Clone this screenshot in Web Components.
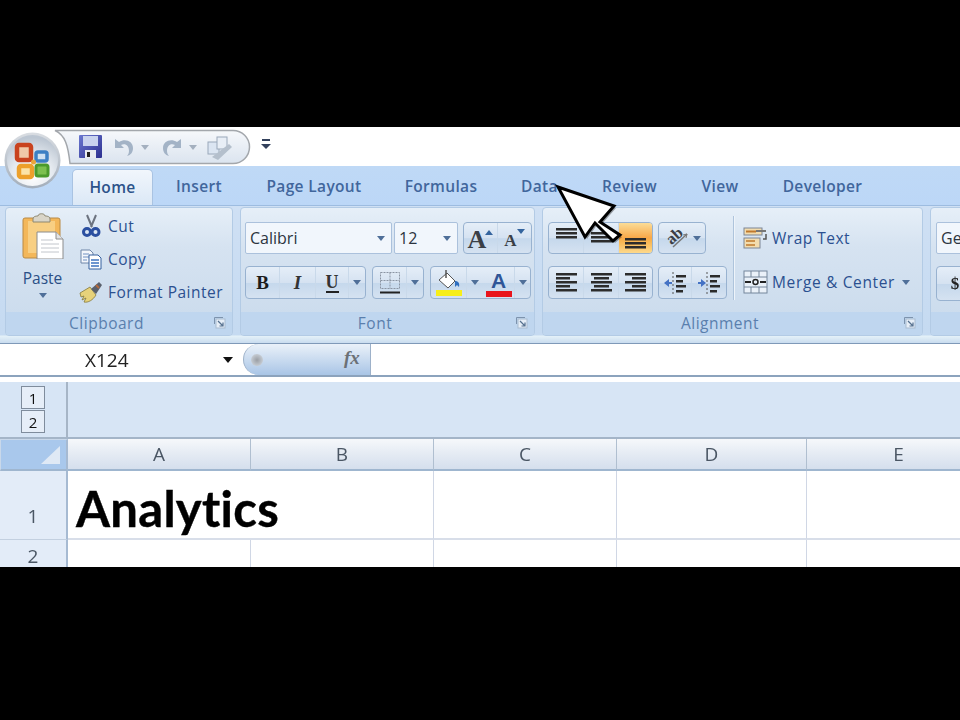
<!DOCTYPE html>
<html>
<head>
<meta charset="utf-8">
<title>Analytics</title>
<style>
  html, body { margin: 0; background: #000; }
  body { padding-top: 127px; height: 593px; overflow: hidden; font-family: "Open Sans", sans-serif; }
</style>
</head>
<body>
<xl-window>
  <xl-title-bar></xl-title-bar>
  <xl-tabs>
    <xl-tab w="81" active>Home</xl-tab>
    <xl-tab w="92">Insert</xl-tab>
    <xl-tab w="138">Page Layout</xl-tab>
    <xl-tab w="116">Formulas</xl-tab>
    <xl-tab w="81">Data</xl-tab>
    <xl-tab w="99">Review</xl-tab>
    <xl-tab w="82">View</xl-tab>
    <xl-tab w="123">Developer</xl-tab>
  </xl-tabs>
  <xl-ribbon>
    <xl-group label="Clipboard" w="228" launcher>
      <xl-paste></xl-paste>
      <div style="display:flex;flex-direction:column;padding-top:1px">
        <xl-row-button>
          <svg slot="icon" width="24" height="24" viewBox="0 0 24 24"><path d="M8 1l5 12M17 1l-5 12" stroke="#6d7480" stroke-width="2" fill="none"/><circle cx="8" cy="18" r="3.500" fill="none" stroke="#2b4fa0" stroke-width="3"/><circle cx="16.500" cy="18" r="3.500" fill="none" stroke="#2b4fa0" stroke-width="3"/></svg>
          Cut
        </xl-row-button>
        <xl-row-button>
          <svg slot="icon" width="24" height="24" viewBox="0 0 24 24"><path d="M2 3h9l3 3v10H2z" fill="#f3f6fb" stroke="#6f86a8"/><path d="M4 7h6M4 10h6M4 13h4" stroke="#6f8fc0"/><path d="M10 8h9l3 3v11H10z" fill="#fff" stroke="#35609f"/><path d="M12 13h8M12 16h8M12 19h8" stroke="#3f74c0" stroke-width="1.4"/></svg>
          Copy
        </xl-row-button>
        <xl-row-button>
          <svg slot="icon" width="24" height="24" viewBox="0 0 24 24"><path d="M1 13l10-6 6 8c-3 5-8 8-12 7l2-4-4 2 2-4-3 1z" fill="#e7d27a" stroke="#85783a" stroke-width=".8"/><path d="M12 9l8-7 3 3-6 9z" fill="#59606c"/><path d="M17 5l3 3" stroke="#b56a3d" stroke-width="2"/></svg>
          Format Painter
        </xl-row-button>
      </div>
    </xl-group>

    <xl-group label="Font" w="295" launcher>
      <div style="display:flex;flex-direction:column;gap:12px;padding:14px 0 0 4px">
        <div style="display:flex;height:32px">
          <xl-combo w="147">Calibri</xl-combo>
          <xl-combo w="64" style="margin-left:2px">12</xl-combo>
          <xl-btn-set style="margin-left:5px">
            <xl-tool w="34">
              <span style="font:700 26px/28px 'Liberation Serif',serif;color:#3a3f46;margin-top:3px">A</span>
              <svg width="8" height="5" style="align-self:flex-start;margin:7px 0 0 -1px"><path d="M0 5l4-5 4 5z" fill="#34649e"/></svg>
            </xl-tool>
            <xl-tool w="33">
              <span style="font:700 17px/20px 'Liberation Serif',serif;color:#3a3f46;margin-top:6px">A</span>
              <svg width="8" height="5" style="align-self:flex-start;margin:6px 0 0 0"><path d="M0 0h8L4 5z" fill="#34649e"/></svg>
            </xl-tool>
          </xl-btn-set>
        </div>
        <div style="display:flex;height:33px">
          <xl-btn-set>
            <xl-tool w="34"><span style="font:700 19px 'Liberation Serif',serif;color:#1c1c1c">B</span></xl-tool>
            <xl-tool w="36"><span style="font:italic 700 19px 'Liberation Serif',serif;color:#333">I</span></xl-tool>
            <xl-tool w="33"><span style="font:700 18px/18px 'Liberation Serif',serif;color:#333;border-bottom:2px solid #222">U</span></xl-tool>
            <xl-tool w="16" plain><xl-caret></xl-caret></xl-tool>
          </xl-btn-set>
          <xl-btn-set style="margin-left:6px">
            <xl-tool w="34"><svg width="22" height="24" viewBox="0 0 22 24"><path d="M1.500 1.500h19v16h-19zM11 1.500v16M1.500 9.500h19" fill="none" stroke="#8a94a3" stroke-dasharray="2 1"/><path d="M1 21.500h20" stroke="#222" stroke-width="2"/></svg></xl-tool>
            <xl-tool w="16" plain><xl-caret></xl-caret></xl-tool>
          </xl-btn-set>
          <xl-btn-set style="margin-left:6px">
            <xl-tool w="36"><svg width="28" height="28" viewBox="0 0 28 28"><path d="M4 11l8-7 8 8-7 7z" fill="#fff" stroke="#555"/><path d="M11 1v8" stroke="#555" stroke-width="1.500"/><path d="M20 12c3 0 5 2 4 6l-2-2-2 2z" fill="#2f6fc0"/><rect x="1" y="21" width="26" height="6" fill="#f7ee1a"/></svg></xl-tool>
            <xl-tool w="16" plain><xl-caret></xl-caret></xl-tool>
            <xl-tool w="32" style="flex-direction:column">
              <span style="font:700 21px/20px 'Liberation Sans',sans-serif;color:#2f5597;margin-top:2px">A</span>
              <span style="width:26px;height:6px;background:#e8141c"></span>
            </xl-tool>
            <xl-tool w="15" plain><xl-caret></xl-caret></xl-tool>
          </xl-btn-set>
        </div>
      </div>
    </xl-group>

    <xl-group label="Alignment" w="381" launcher>
      <div style="display:flex;padding:14px 0 0 5px">
        <div style="display:flex;flex-direction:column;gap:12px">
          <div style="display:flex;height:32px">
            <xl-btn-set>
              <xl-tool w="35"><xl-lines rows="0:21,0:21,0:21" style="margin-top:-8px"></xl-lines></xl-tool>
              <xl-tool w="35"><xl-lines rows="0:21,0:21,0:21"></xl-lines></xl-tool>
              <xl-tool w="33" on><xl-lines rows="0:21,0:21,0:21" style="margin-top:11px"></xl-lines></xl-tool>
            </xl-btn-set>
            <xl-btn-set style="margin-left:5px">
              <xl-tool w="46">
                <span style="position:relative;display:block;width:30px;height:26px">
                  <span style="position:absolute;left:3px;top:1px;font:700 16px/20px 'Liberation Serif',serif;color:#3c3f45;transform:rotate(-42deg)">ab</span>
                  <svg width="30" height="26" style="position:absolute;left:0;top:0"><path d="M10 22L24 9" stroke="#777" stroke-width="1.500"/><path d="M24 9l-1 4M24 9l-4 1" stroke="#777"/></svg>
                </span>
                <xl-caret></xl-caret>
              </xl-tool>
            </xl-btn-set>
          </div>
          <div style="display:flex;height:33px">
            <xl-btn-set>
              <xl-tool w="35"><xl-lines rows="0:21,0:14,0:21,0:14,0:21"></xl-lines></xl-tool>
              <xl-tool w="35"><xl-lines rows="0:21,3:15,0:21,3:15,0:21"></xl-lines></xl-tool>
              <xl-tool w="33"><xl-lines rows="0:21,7:14,0:21,7:14,0:21"></xl-lines></xl-tool>
            </xl-btn-set>
            <xl-btn-set style="margin-left:5px">
              <xl-tool w="33"><svg width="24" height="24" viewBox="0 0 24 24"><path d="M10 1v22" stroke="#555" stroke-dasharray="2 2"/><path d="M13 4h10v2.500H13zM13 9h7v2.500h-7zM13 14h10v2.500H13zM13 19h7v2.500h-7z" fill="#2b2b2b"/><path d="M1 12l5-4v3h3v2H6v3z" fill="#4472c4"/></svg></xl-tool>
              <xl-tool w="34"><svg width="24" height="24" viewBox="0 0 24 24"><path d="M10 1v22" stroke="#555" stroke-dasharray="2 2"/><path d="M13 4h10v2.500H13zM13 9h7v2.500h-7zM13 14h10v2.500H13zM13 19h7v2.500h-7z" fill="#2b2b2b"/><path d="M9 12L4 8v3H1v2h3v3z" fill="#4472c4"/></svg></xl-tool>
            </xl-btn-set>
          </div>
        </div>
        <div style="width:2px;height:84px;margin:-6px 8px 0 6px;background:#aec4dc;border-right:1px solid #eef4fa;box-sizing:border-box"></div>
        <div style="display:flex;flex-direction:column;margin-top:-1px">
          <xl-row-button style="gap:4px">
            <svg slot="icon" width="25" height="24" viewBox="0 0 25 24"><rect x="1" y="2" width="18" height="7" fill="#f2dcae" stroke="#7c8696"/><path d="M3 5.500h10" stroke="#c0792c" stroke-width="2"/><path d="M13 5h10" stroke="#777" stroke-width="2"/><rect x="1" y="12" width="16" height="10" fill="#f2dcae" stroke="#7c8696"/><path d="M3 15h9M3 19h9" stroke="#c0792c" stroke-width="1.500"/><path d="M23 8v5h-3" fill="none" stroke="#555" stroke-width="1.500"/></svg>
            Wrap Text
          </xl-row-button>
          <xl-row-button style="margin-top:11px;gap:4px;letter-spacing:.65px">
            <svg slot="icon" width="25" height="24" viewBox="0 0 25 24"><rect x="1" y="1" width="23" height="22" fill="#eaf1f9" stroke="#75869b"/><path d="M1 7h23M1 17h23M8 1v6M16 1v6M8 17v6M16 17v6" stroke="#75869b"/><path d="M2 12h6M23 12h-6" stroke="#222" stroke-width="2"/><circle cx="12.500" cy="12" r="2.500" fill="none" stroke="#222" stroke-width="1.500"/></svg>
            <span>Merge &amp; Center<xl-caret style="margin-left:7px;vertical-align:3px"></xl-caret></span>
          </xl-row-button>
        </div>
      </div>
    </xl-group>

    <xl-group w="300">
      <div style="display:flex;flex-direction:column;gap:12px;padding:14px 0 0 5px">
        <xl-combo w="160" style="height:32px">Ge</xl-combo>
        <xl-btn-set style="height:33px">
          <xl-tool w="36"><span style="font:700 17px 'Liberation Serif',serif;color:#222">$</span></xl-tool>
        </xl-btn-set>
      </div>
    </xl-group>
  </xl-ribbon>
  <xl-formula-bar name="X124"></xl-formula-bar>
  <xl-outline></xl-outline>
  <xl-sheet></xl-sheet>
  <xl-pointer></xl-pointer>
</xl-window>

<script>
class XlWindow extends HTMLElement {
  constructor() {
    super();
    this.attachShadow({ mode: "open" });
    this.shadowRoot.innerHTML = `
    <style>
      :host { display: block; position: relative; width: 960px; height: 440px; overflow: hidden; background: #fff; }
      #inner { filter: blur(0.45px); height: 100%; }
    </style>
    <div id="inner"><slot></slot></div>`;
  }
}

class XlTitleBar extends HTMLElement {
  constructor() {
    super();
    this.attachShadow({ mode: "open" });
    this.shadowRoot.innerHTML = `
    <style>
      :host { display: flex; height: 39px; background: #fff; position: relative; z-index: 3; }
      #orb { position: absolute; left: 4px; top: 5px; z-index: 2; }
      #qat { position: relative; width: 198px; height: 36px; margin: 2px 0 0 53px; display: flex; align-items: center; }
      #qat > svg.shape { position: absolute; inset: 0; }
      .i { position: absolute; }
      #more { margin: 12px 0 0 10px; }
    </style>
    <svg id="orb" width="58" height="58" viewBox="0 0 58 58">
      <defs>
        <linearGradient id="rim" x1="0" y1="0" x2="0" y2="1"><stop offset="0" stop-color="#d9dde2"/><stop offset="1" stop-color="#a3aebb"/></linearGradient>
        <radialGradient id="face" cx=".5" cy=".8" r=".75"><stop offset="0" stop-color="#ffffff"/><stop offset=".55" stop-color="#e4e9ef"/><stop offset="1" stop-color="#bcc6d2"/></radialGradient>
      </defs>
      <circle cx="28.500" cy="28.500" r="28" fill="url(#rim)"/>
      <circle cx="28.500" cy="28.500" r="25.500" fill="url(#face)"/>
      <rect x="13" y="13" width="14" height="15" rx="2" fill="#f0c9a8" stroke="#c9431f" stroke-width="4.500"/>
      <rect x="32" y="20" width="11" height="9" rx="2" fill="#cfe0f2" stroke="#3c7fc4" stroke-width="3.500"/>
      <rect x="15" y="34" width="13" height="11" rx="2" fill="#fbe3a8" stroke="#eda02b" stroke-width="4.500"/>
      <rect x="32" y="33" width="12" height="11" rx="2" fill="#7cc04f" stroke="#4a9a2c" stroke-width="3"/>
      <circle cx="29.500" cy="30" r="2.500" fill="#e8a53a"/>
    </svg>
    <div id="qat">
      <svg class="shape" width="198" height="36" viewBox="0 0 198 36">
        <defs><linearGradient id="q" x1="0" y1="0" x2="0" y2="1"><stop offset="0" stop-color="#f6f8fb"/><stop offset="1" stop-color="#dbe4ef"/></linearGradient></defs>
        <path d="M2 1.500H180a16.500 16.500 0 0 1 0 33H17C15 16 12 6 2 1.500z" fill="url(#q)" stroke="#a3a7ac" stroke-width="1.500"/>
      </svg>
      <svg class="i" style="left:26px;top:6px" width="23" height="23" viewBox="0 0 23 23"><defs><linearGradient id="sv" x1="0" y1="0" x2="1" y2="1"><stop offset="0" stop-color="#6b78d0"/><stop offset="1" stop-color="#2c2f8f"/></linearGradient></defs><rect width="23" height="23" rx="1" fill="url(#sv)"/><rect x="4" y="1" width="15" height="10" fill="#c9d3ee"/><rect x="6" y="15" width="11" height="8" fill="#e9ecf2"/><rect x="8" y="17" width="3" height="5" fill="#222"/></svg>
      <svg class="i" style="left:60px;top:7px" width="22" height="22" viewBox="0 0 22 22"><path d="M2 3v9h9L8 9c4-2 8 0 8 6 0 2-1 4-2 5 4-1 6-4 6-8 0-7-8-10-14-6z" fill="#a3b3c6"/></svg>
      <svg class="i" style="left:88px;top:16px" width="8" height="5"><path d="M0 0h8L4 5z" fill="#a4b0bf"/></svg>
      <svg class="i" style="left:108px;top:7px" width="22" height="22" viewBox="0 0 22 22"><path d="M20 3v9h-9l3-3c-4-2-8 0-8 6 0 2 1 4 2 5-4-1-6-4-6-8 0-7 8-10 14-6z" fill="#a3b3c6"/></svg>
      <svg class="i" style="left:136px;top:16px" width="8" height="5"><path d="M0 0h8L4 5z" fill="#a4b0bf"/></svg>
      <svg class="i" style="left:154px;top:5px" width="27" height="27" viewBox="0 0 27 27"><rect x="1" y="8" width="11" height="12" fill="#dbe5f2" stroke="#9aa8ba"/><rect x="10" y="3" width="10" height="12" fill="#e8eef6" stroke="#9aa8ba"/><path d="M5 23L22 10l3 3L11 26z" fill="#b4bfcc"/></svg>
    </div>
    <svg id="more" width="10" height="11" viewBox="0 0 10 11"><path d="M1 0h8v2H1z" fill="#33415c"/><path d="M0 5h10L5 10z" fill="#33415c"/></svg>`;
  }
}

class XlTabs extends HTMLElement {
  constructor() {
    super();
    this.attachShadow({ mode: "open" });
    this.shadowRoot.innerHTML = `
    <style>
      :host { display: flex; align-items: flex-end; height: 39px; box-sizing: border-box; padding-left: 72px; background: linear-gradient(#bfd9f6, #bcd7f7); }
    </style>
    <slot></slot>`;
  }
}

class XlTab extends HTMLElement {
  constructor() {
    super();
    this.attachShadow({ mode: "open" });
    this.shadowRoot.innerHTML = `
    <style>
      :host { display: flex; align-items: center; justify-content: center; box-sizing: border-box; height: 36px; padding-bottom: 2px; font: 600 15.500px "Open Sans", sans-serif; letter-spacing: .35px; color: #41669c; }
      :host([active]) { background: linear-gradient(#f1f6fc, #dbe8f6); border: 1px solid #a9c3e2; border-bottom: 0; border-radius: 5px 5px 0 0; color: #2c5389; }
    </style>
    <slot></slot>`;
  }
  connectedCallback() {
    this.style.width = this.getAttribute("w") + "px";
  }
}

class XlRibbon extends HTMLElement {
  constructor() {
    super();
    this.attachShadow({ mode: "open" });
    this.shadowRoot.innerHTML = `
    <style>
      :host { display: flex; gap: 7px; box-sizing: border-box; height: 139px; padding: 1px 0 0 5px; border-top: 1px solid #9dbce0; border-bottom: 1px solid #7f99b8; background: linear-gradient(#cfe0f4, #c5daf1 94%, #e4f1f8 95%, #c9dcef); }
    </style>
    <slot></slot>`;
  }
}

class XlGroup extends HTMLElement {
  constructor() {
    super();
    this.attachShadow({ mode: "open" });
    this.shadowRoot.innerHTML = `
    <style>
      :host { display: flex; flex: none; flex-direction: column; box-sizing: border-box; height: 129px; border: 1px solid #b3cbe5; border-radius: 4px; overflow: hidden; background: linear-gradient(#e6eff8, #d6e3f1 30%, #c9daec 100%); }
      #body { flex: 1; display: flex; min-height: 0; }
      #label { position: relative; box-sizing: border-box; height: 23px; padding-right: 25px; text-align: center; background: #bfd6ef; font: 15.500px/22px "Open Sans", sans-serif; letter-spacing: .5px; color: #5a7fad; }
      svg { position: absolute; right: 6px; top: 5px; }
    </style>
    <div id="body"><slot></slot></div>
    <div id="label"></div>`;
  }
  connectedCallback() {
    this.style.width = this.getAttribute("w") + "px";
    const label = this.shadowRoot.querySelector("#label");
    label.textContent = this.getAttribute("label") || "";
    if (this.hasAttribute("launcher")) {
      label.insertAdjacentHTML("beforeend", `<svg width="12" height="12" viewBox="0 0 12 12"><path d="M.5 7V.5H9" fill="none" stroke="#7d93ad"/><rect x="2" y="2" width="9" height="9" fill="#e6eef7" stroke="#a9bbd0"/><path d="M4 4l5 5M9 5.500V9H5.500" fill="none" stroke="#55708f" stroke-width="1.200"/></svg>`);
    }
  }
}

class XlPaste extends HTMLElement {
  constructor() {
    super();
    this.attachShadow({ mode: "open" });
    this.shadowRoot.innerHTML = `
    <style>
      :host { display: flex; flex-direction: column; align-items: center; flex: none; width: 73px; box-sizing: border-box; padding-top: 4px; font: 15.500px "Open Sans", sans-serif; color: #2a4f86; }
      span { line-height: 20px; margin-top: 9px; }
      xl-caret { margin-top: 5px; }
    </style>
    <svg width="44" height="47" viewBox="0 0 44 47">
      <rect x="2" y="6" width="37" height="40" rx="2" fill="#f3b75a" stroke="#b98a45"/>
      <rect x="7" y="9" width="27" height="32" fill="#f8cf83"/>
      <path d="M12 7c0-3 4-3 5-3 0-3 7-3 7 0 1 0 5 0 5 3v3H12z" fill="#d9d5c8" stroke="#8d8770"/>
      <path d="M16 20h19l7 7v20H16z" fill="#fff" stroke="#8c8c8c"/>
      <path d="M35 20v7h7" fill="#e3e3e3" stroke="#8c8c8c"/>
      <path d="M20 28h12M20 32h18M20 36h18M20 40h18" stroke="#c2c6cc"/>
    </svg>
    <span>Paste</span>
    <xl-caret></xl-caret>`;
  }
}

class XlRowButton extends HTMLElement {
  constructor() {
    super();
    this.attachShadow({ mode: "open" });
    this.shadowRoot.innerHTML = `
    <style>
      :host { display: flex; align-items: center; gap: 5px; height: 33px; font: 15.500px "Open Sans", sans-serif; letter-spacing: .5px; color: #2b5090; white-space: nowrap; }
      ::slotted(svg) { flex: none; }
    </style>
    <slot name="icon"></slot><slot></slot>`;
  }
}

class XlCombo extends HTMLElement {
  constructor() {
    super();
    this.attachShadow({ mode: "open" });
    this.shadowRoot.innerHTML = `
    <style>
      :host { display: flex; flex: none; align-items: center; justify-content: space-between; box-sizing: border-box; padding: 0 6px 0 4px; border: 1px solid #abc1dc; border-radius: 2px; background: #f1f6fc; font: 16px "Open Sans", sans-serif; color: #2c3440; }
    </style>
    <slot></slot><xl-caret></xl-caret>`;
  }
  connectedCallback() {
    this.style.width = this.getAttribute("w") + "px";
  }
}

class XlBtnSet extends HTMLElement {
  constructor() {
    super();
    this.attachShadow({ mode: "open" });
    this.shadowRoot.innerHTML = `
    <style>
      :host { display: flex; flex: none; width: max-content; border: 1px solid #98b2d0; border-radius: 4px; overflow: hidden; background: linear-gradient(#e5eef8, #d5e2f1 50%, #c5d8ec 52%, #d5e2f1); }
    </style>
    <slot></slot>`;
  }
}

class XlTool extends HTMLElement {
  constructor() {
    super();
    this.attachShadow({ mode: "open" });
    this.shadowRoot.innerHTML = `
    <style>
      :host { display: flex; flex: none; align-items: center; justify-content: center; box-sizing: border-box; border-right: 1px solid #c9d9ea; }
      :host(:last-child) { border-right: 0; }
      :host([plain]) { border-right: 0; }
      :host([on]) { background: linear-gradient(#fbdc97, #f9a848 50%, #f8b44f 60%, #fdd98c); }
    </style>
    <slot></slot>`;
  }
  connectedCallback() {
    this.style.width = this.getAttribute("w") + "px";
  }
}

class XlCaret extends HTMLElement {
  constructor() {
    super();
    this.attachShadow({ mode: "open" });
    this.shadowRoot.innerHTML = `
    <style>
      :host { display: inline-block; width: 0; height: 0; border: 4.500px solid transparent; border-bottom: 0; border-top: 5px solid #4f6f99; }
    </style>`;
  }
}

// alignment glyphs: rows="offset:width,..."
class XlLines extends HTMLElement {
  constructor() {
    super();
    this.attachShadow({ mode: "open" });
  }
  connectedCallback() {
    const rows = this.getAttribute("rows").split(",").map(r => r.split(":").map(Number));
    const bars = rows.map((r, i) => `<rect x="${r[0]}" y="${i * 4}" width="${r[1]}" height="2.5" fill="#2c2c2c"/>`).join("");
    this.shadowRoot.innerHTML = `
    <style>:host { display: block; line-height: 0; }</style>
    <svg width="21" height="${rows.length * 4}">${bars}</svg>`;
  }
}

class XlFormulaBar extends HTMLElement {
  constructor() {
    super();
    this.attachShadow({ mode: "open" });
    this.shadowRoot.innerHTML = `
    <style>
      :host { display: block; height: 38px; background: #fff; }
      #bar { display: flex; box-sizing: border-box; height: 33px; border-bottom: 2px solid #8ca3bd; }
      #name { display: flex; align-items: center; width: 243px; box-sizing: border-box; padding: 1px 10px 0 85px; justify-content: space-between; font: 19px "Open Sans", sans-serif; color: #222; }
      #arrow { width: 0; height: 0; border: 5.500px solid transparent; border-bottom: 0; border-top: 6px solid #111; }
      #pill { position: relative; width: 128px; box-sizing: border-box; border-radius: 16px 0 0 16px; border: 1px solid #9db1c9; border-width: 0 1px 0 1px; background: linear-gradient(#eaf1f9, #a9c5e6); }
      #dot { position: absolute; left: 7px; top: 10px; width: 12px; height: 12px; border-radius: 50%; background: radial-gradient(#9a9ea4, #d8dfe7); }
      #fx { position: absolute; left: 100px; top: 3px; font: italic 700 19px "Liberation Serif", serif; color: #6b7076; }
      #rule { height: 5px; border-bottom: 1px solid #8ca3bd; box-sizing: content-box; }
    </style>
    <div id="bar">
      <div id="name"><span></span><div id="arrow"></div></div>
      <div id="pill"><div id="dot"></div><div id="fx">fx</div></div>
    </div>
    <div id="rule"></div>`;
  }
  connectedCallback() {
    this.shadowRoot.querySelector("#name span").textContent = this.getAttribute("name");
  }
}

class XlOutline extends HTMLElement {
  constructor() {
    super();
    this.attachShadow({ mode: "open" });
    this.shadowRoot.innerHTML = `
    <style>
      :host { display: flex; box-sizing: border-box; height: 57px; background: #d7e5f5; border-bottom: 2px solid #a4b5c8; }
      #levels { display: flex; flex-direction: column; align-items: center; gap: 1px; box-sizing: border-box; width: 68px; padding-top: 4px; border-right: 2px solid #a6b5c6; }
      span { display: flex; align-items: center; justify-content: center; box-sizing: border-box; width: 24px; height: 23px; border: 1.500px solid #7f8c9c; background: #e6eef8; font: 15px "Open Sans", sans-serif; color: #111; }
    </style>
    <div id="levels"><span>1</span><span>2</span></div>`;
  }
}

class XlSheet extends HTMLElement {
  constructor() {
    super();
    this.attachShadow({ mode: "open" });
    const cols = ["A", "B", "C", "D", "E"];
    let cells = `<div class="corner"><svg width="19" height="18" viewBox="0 0 19 18"><path d="M19 0v18H0z" fill="#dfe9f5"/></svg></div>`;
    cells += cols.map(c => `<div class="col">${c}</div>`).join("");
    cells += `<div class="row r1">1</div><div class="cell title">Analytics</div>` + `<div class="cell"></div>`.repeat(4);
    cells += `<div class="row r2">2</div>` + `<div class="cell"></div>`.repeat(5);
    this.shadowRoot.innerHTML = `
    <style>
      :host { display: grid; grid-template-columns: 68px 183px 183px 183px 190px 184px; grid-template-rows: 32px 69px 32px; width: 991px; }
      div { box-sizing: border-box; }
      .corner { display: flex; align-items: flex-end; justify-content: flex-end; padding: 0 6px 5px 0; background: #a9c8ec; border: 1px solid #c9d8ea; border-right: 2px solid #a6bad2; border-bottom: 2px solid #9fb6cf; }
      .col { display: flex; align-items: center; justify-content: center; background: linear-gradient(#f6f8fb, #e6ecf4 45%, #d5dfed); border-right: 1px solid #b0bfd0; border-bottom: 2px solid #9fb6cf; font: 19px "Open Sans", sans-serif; color: #4a5664; }
      .row { display: flex; justify-content: center; background: #e3ecf8; border-right: 2px solid #a6bad2; border-bottom: 1px solid #c3d0e0; font: 19px/22px "Open Sans", sans-serif; color: #4a5664; }
      .r1 { align-items: flex-end; padding-bottom: 12px; }
      .r2 { align-items: flex-start; padding-top: 5px; }
      .cell { border-right: 1px solid #d0d7e5; border-bottom: 2px solid #d8dee9; background: #fff; white-space: nowrap; }
      .title { position: relative; z-index: 1; display: flex; align-items: flex-end; padding: 0 0 0 8px; border-right: 0; background: transparent; font: 700 49px/60px Lato, sans-serif; letter-spacing: .3px; -webkit-text-stroke: .4px #000; font-variant-ligatures: none; color: #000; }
      .title + .cell { background: transparent; }
    </style>
    ${cells}`;
  }
}

// arrow drawn over the ribbon in the slide
class XlPointer extends HTMLElement {
  constructor() {
    super();
    this.attachShadow({ mode: "open" });
    this.shadowRoot.innerHTML = `
    <style>
      :host { position: absolute; left: 550px; top: 53px; display: block; width: 80px; height: 70px; }
    </style>
    <svg width="80" height="70" viewBox="0 0 80 70">
      <path d="M8 7L64 26 50 42 70 55 63 61 45 43 35 57z" transform="translate(2 2)" fill="#000" opacity=".35"/>
      <path d="M8 7L64 26 50 42 70 55 63 61 45 43 35 57z" fill="#fff" stroke="#000" stroke-width="3" stroke-linejoin="miter"/>
    </svg>`;
  }
}

customElements.define("xl-window", XlWindow);
customElements.define("xl-title-bar", XlTitleBar);
customElements.define("xl-tabs", XlTabs);
customElements.define("xl-tab", XlTab);
customElements.define("xl-ribbon", XlRibbon);
customElements.define("xl-group", XlGroup);
customElements.define("xl-paste", XlPaste);
customElements.define("xl-row-button", XlRowButton);
customElements.define("xl-combo", XlCombo);
customElements.define("xl-btn-set", XlBtnSet);
customElements.define("xl-tool", XlTool);
customElements.define("xl-caret", XlCaret);
customElements.define("xl-lines", XlLines);
customElements.define("xl-formula-bar", XlFormulaBar);
customElements.define("xl-outline", XlOutline);
customElements.define("xl-sheet", XlSheet);
customElements.define("xl-pointer", XlPointer);
</script>
</body>
</html>
